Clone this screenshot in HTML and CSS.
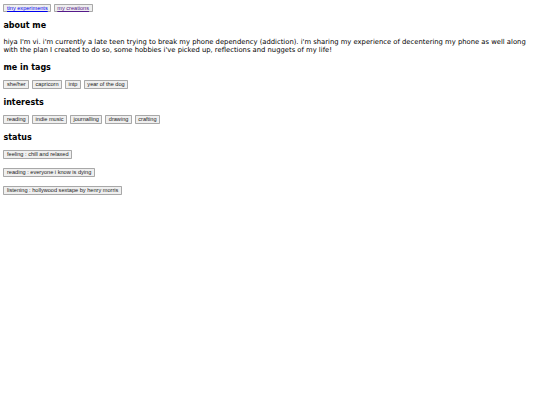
FILE: index.html
```html
<!DOCTYPE html>
<html>
<head>
<meta charset="utf-8">
<link rel="stylesheet" href="styles.css">
</head>
<body>
<nav class="nav">
  <button class="btn"><a class="link" href="#">tiny experiments</a></button>
  <button class="btn"><a class="link visited" href="#">my creations</a></button>
</nav>
<h3 class="title">about me</h3>
<p class="text">hiya I'm vi. i'm currently a late teen trying to break my phone dependency (addiction). i'm sharing my experience of decentering my phone as well along with the plan I created to do so, some hobbies i've picked up, reflections and nuggets of my life!</p>
<h3 class="title">me in tags</h3>
<div class="row">
  <button class="btn">she/her</button>
  <button class="btn">capricorn</button>
  <button class="btn">intp</button>
  <button class="btn">year of the dog</button>
</div>
<h3 class="title">interests</h3>
<div class="row">
  <button class="btn">reading</button>
  <button class="btn">indie music</button>
  <button class="btn">journalling</button>
  <button class="btn">drawing</button>
  <button class="btn">crafting</button>
</div>
<h3 class="title">status</h3>
<div class="stack">
  <div><button class="btn">feeling : chill and relaxed</button></div>
  <div><button class="btn">reading : everyone i know is dying</button></div>
  <div><button class="btn">listening : hollywood sextape by henry morris</button></div>
</div>
</body>
</html>
```

FILE: styles.css
```css
html { background: #fff; }
body {
  margin: 3.4px;
  font-family: "DejaVu Sans", Verdana, sans-serif;
  font-size: 6.8px;
  color: #000;
}
.nav { display: flex; gap: 2.4px; margin-top: 0.6px; }
.btn {
  font-family: "Liberation Sans", Arial, sans-serif;
  font-size: 5.6px;
  line-height: 6.5px;
  padding: 0 2.6px;
  margin: 0;
  background: #efefef;
  border: 1px solid #a8a8a8;
  border-radius: 0.8px;
  color: #222;
}
.link { color: #0000ee; text-decoration: underline; }
.link.visited { color: #551a8b; }
.title {
  font-size: 8px;
  font-weight: bold;
  margin: 8.3px 0;
}
.text { margin: 9.5px 0 8.5px; line-height: 7.6px; }
.row { display: flex; gap: 2.7px; margin-bottom: 9.3px; }
.stack { display: flex; flex-direction: column; gap: 9.5px; }
.stack > div { display: flex; }
```
